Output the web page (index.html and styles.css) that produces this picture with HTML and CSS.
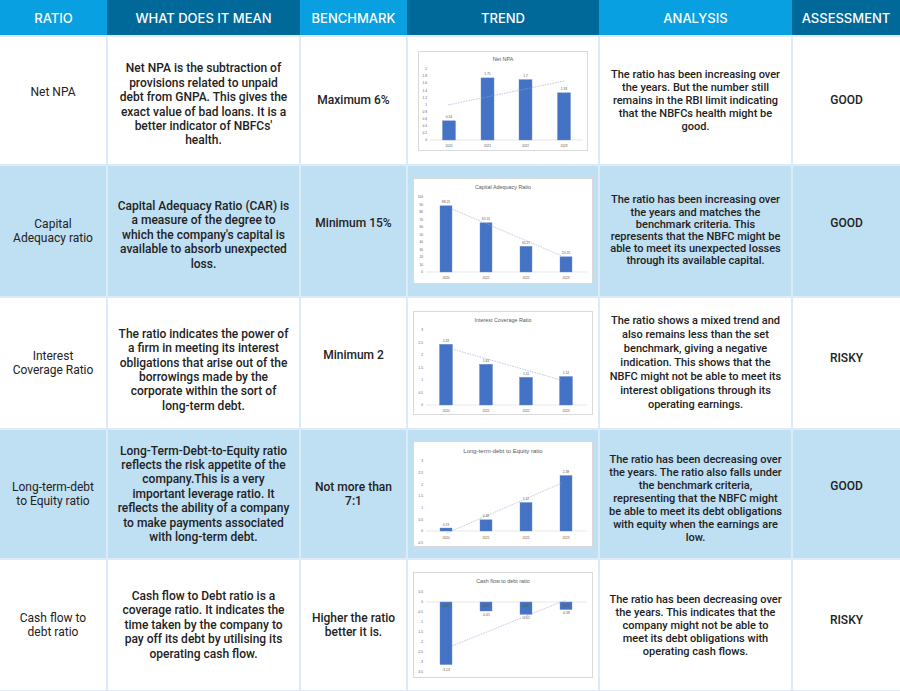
FILE: index.html
```html
<!DOCTYPE html>
<html lang="en">
<head>
<meta charset="utf-8">
<title>NBFC Ratio Analysis</title>
<link rel="stylesheet" href="styles.css">
</head>
<body>
<div class="sheet">
  <div class="head">
    <div class="h light">RATIO</div>
    <div class="h dark">WHAT DOES IT MEAN</div>
    <div class="h light">BENCHMARK</div>
    <div class="h dark">TREND</div>
    <div class="h light">ANALYSIS</div>
    <div class="h dark">ASSESSMENT</div>
  </div>
  <div class="grid">
    <!-- Row 1 -->
    <div class="row">
      <div class="cell ratio lift">Net NPA</div>
      <div class="cell drop-s">Net NPA is the subtraction of provisions related to unpaid debt from GNPA. This gives the exact value of bad loans. It is a better indicator of NBFCs' health.</div>
      <div class="cell">Maximum 6%</div>
      <div class="cell trend">
        <svg class="chart" width="170" height="100" viewBox="0 0 170 100">
          <rect class="frame" x="0.5" y="0.5" width="169" height="99"/>
          <text class="ct" x="85" y="10">Net NPA</text>
          <g class="ya">
            <text x="9" y="19.2">2</text><text x="9" y="26.3">1.8</text><text x="9" y="33.4">1.6</text>
            <text x="9" y="40.5">1.4</text><text x="9" y="47.6">1.2</text><text x="9" y="54.7">1</text>
            <text x="9" y="61.8">0.8</text><text x="9" y="68.9">0.6</text><text x="9" y="76">0.4</text>
            <text x="9" y="83.1">0.2</text><text x="9" y="90.2">0</text>
          </g>
          <line class="axis" x1="12" y1="89" x2="165" y2="89"/>
          <rect class="bar" x="24.5" y="69.8" width="13" height="19.2"/>
          <rect class="bar" x="63" y="26.9" width="13" height="62.1"/>
          <rect class="bar" x="101" y="28.6" width="13" height="60.4"/>
          <rect class="bar" x="139.5" y="41.8" width="13" height="47.2"/>
          <g class="dl">
            <text x="31" y="67.3">0.54</text><text x="69.5" y="24.4">1.75</text>
            <text x="107.5" y="26.1">1.7</text><text x="146" y="39.3">1.33</text>
          </g>
          <g class="xa">
            <text x="31" y="95.5">2020</text><text x="69.5" y="95.5">2021</text>
            <text x="107.5" y="95.5">2022</text><text x="146" y="95.5">2023</text>
          </g>
          <line class="tl" x1="30" y1="54" x2="146" y2="30"/>
        </svg>
      </div>
      <div class="cell an">The ratio has been increasing over the years. But the number still remains in the RBI limit indicating that the NBFCs health might be good.</div>
      <div class="cell">GOOD</div>
    </div>

    <!-- Row 2 -->
    <div class="row alt">
      <div class="cell ratio">Capital Adequacy ratio</div>
      <div class="cell drop-s">Capital Adequacy Ratio (CAR) is a measure of the degree to which the company's capital is available to absorb unexpected loss.</div>
      <div class="cell lift">Minimum 15%</div>
      <div class="cell trend">
        <svg class="chart" width="180" height="106" viewBox="0 0 180 106">
          <rect class="frame" x="0.5" y="0.5" width="179" height="105"/>
          <text class="ct" x="90" y="10.5">Capital Adequacy Ratio</text>
          <g class="ya">
            <text x="10" y="20.2">100</text><text x="10" y="27.7">90</text><text x="10" y="35.2">80</text>
            <text x="10" y="42.7">70</text><text x="10" y="50.2">60</text><text x="10" y="57.7">50</text>
            <text x="10" y="65.2">40</text><text x="10" y="72.7">30</text><text x="10" y="80.2">20</text>
            <text x="10" y="87.7">10</text><text x="10" y="95.2">0</text>
          </g>
          <line class="axis" x1="13" y1="94" x2="174" y2="94"/>
          <rect class="bar" x="27" y="27.8" width="12" height="66.2"/>
          <rect class="bar" x="67" y="44.8" width="12" height="49.2"/>
          <rect class="bar" x="107" y="68.3" width="12" height="25.7"/>
          <rect class="bar" x="147" y="78.8" width="12" height="15.2"/>
          <g class="dl">
            <text x="33" y="25">88.25</text><text x="73" y="42">65.55</text>
            <text x="113" y="65.5">34.27</text><text x="153" y="76">20.25</text>
          </g>
          <g class="xa">
            <text x="33" y="101">2020</text><text x="73" y="101">2021</text>
            <text x="113" y="101">2022</text><text x="153" y="101">2023</text>
          </g>
          <line class="tl" x1="39" y1="31" x2="149" y2="78"/>
        </svg>
      </div>
      <div class="cell an tight">The ratio has been increasing over the years and matches the benchmark criteria. This<br>represents that the NBFC might be able to meet its unexpected losses through its available capital.</div>
      <div class="cell lift">GOOD</div>
    </div>

    <!-- Row 3 -->
    <div class="row">
      <div class="cell ratio">Interest Coverage Ratio</div>
      <div class="cell drop">The ratio indicates the power of a firm in meeting its interest obligations that arise out of the borrowings made by the corporate within the sort of long-term debt.</div>
      <div class="cell lift">Minimum 2</div>
      <div class="cell trend">
        <svg class="chart" width="180" height="104" viewBox="0 0 180 104">
          <rect class="frame" x="0.5" y="0.5" width="179" height="103"/>
          <text class="ct" x="90" y="11">Interest Coverage Ratio</text>
          <g class="ya">
            <text x="10" y="20.2">3</text><text x="10" y="32.7">2.5</text><text x="10" y="45.2">2</text>
            <text x="10" y="57.7">1.5</text><text x="10" y="70.2">1</text><text x="10" y="82.7">0.5</text>
            <text x="10" y="95.2">0</text>
          </g>
          <line class="axis" x1="13" y1="94" x2="174" y2="94"/>
          <rect class="bar" x="26.5" y="33.25" width="13" height="60.75"/>
          <rect class="bar" x="66.5" y="53.25" width="13" height="40.75"/>
          <rect class="bar" x="106.5" y="66.25" width="13" height="27.75"/>
          <rect class="bar" x="146.5" y="65.5" width="13" height="28.5"/>
          <g class="dl">
            <text x="33" y="30.5">2.43</text><text x="73" y="50.5">1.63</text>
            <text x="113" y="63.5">1.11</text><text x="153" y="62.8">1.14</text>
          </g>
          <g class="xa">
            <text x="33" y="100.5">2020</text><text x="73" y="100.5">2021</text>
            <text x="113" y="100.5">2022</text><text x="153" y="100.5">2023</text>
          </g>
          <line class="tl" x1="39" y1="38" x2="148" y2="69"/>
        </svg>
      </div>
      <div class="cell an loose">The ratio shows a mixed trend and also remains less than the set benchmark, giving a negative indication. This shows that the NBFC might not be able to meet its interest obligations through its operating earnings.</div>
      <div class="cell lift-m">RISKY</div>
    </div>

    <!-- Row 4 -->
    <div class="row alt">
      <div class="cell ratio">Long-term-debt to Equity ratio</div>
      <div class="cell">Long-Term-Debt-to-Equity ratio reflects the risk appetite of the company.This is a very important leverage ratio. It reflects the ability of a company to make payments associated with long-term debt.</div>
      <div class="cell">Not more than 7:1</div>
      <div class="cell trend">
        <svg class="chart" width="180" height="106" viewBox="0 0 180 106">
          <rect class="frame" x="0.5" y="0.5" width="179" height="105"/>
          <text class="ct big" x="90" y="12">Long-term-debt to Equity ratio</text>
          <g class="ya">
            <text x="10" y="21.2">3</text><text x="10" y="32.9">2.5</text><text x="10" y="44.5">2</text>
            <text x="10" y="56.2">1.5</text><text x="10" y="67.9">1</text><text x="10" y="79.5">0.5</text>
            <text x="10" y="91.2">0</text><text x="10" y="102.9">-0.5</text>
          </g>
          <line class="axis" x1="13" y1="90" x2="174" y2="90"/>
          <rect class="bar" x="27" y="87" width="12" height="3"/>
          <rect class="bar" x="67" y="78.8" width="12" height="11.2"/>
          <rect class="bar" x="107" y="61.5" width="12" height="28.5"/>
          <rect class="bar" x="147" y="34.5" width="12" height="55.5"/>
          <g class="dl">
            <text x="33" y="84.5">0.13</text><text x="73" y="76.3">0.48</text>
            <text x="113" y="59">1.22</text><text x="153" y="32">2.38</text>
          </g>
          <g class="xa">
            <text x="33" y="97.5">2020</text><text x="73" y="97.5">2021</text>
            <text x="113" y="97.5">2022</text><text x="153" y="97.5">2023</text>
          </g>
          <line class="tl" x1="34" y1="92" x2="149" y2="42"/>
        </svg>
      </div>
      <div class="cell an drop-s">The ratio has been decreasing over the years. The ratio also falls under the benchmark criteria, representing that the NBFC might be able to meet its debt obligations with equity when the earnings are low.</div>
      <div class="cell lift">GOOD</div>
    </div>

    <!-- Row 5 -->
    <div class="row">
      <div class="cell ratio">Cash flow to debt ratio</div>
      <div class="cell">Cash flow to Debt ratio is a coverage ratio. It indicates the time taken by the company to pay off its debt by utilising its operating cash flow.</div>
      <div class="cell">Higher the ratio better it is.</div>
      <div class="cell trend">
        <svg class="chart" width="180" height="106" viewBox="0 0 180 106">
          <rect class="frame" x="0.5" y="0.5" width="179" height="105"/>
          <text class="ct" x="90" y="11">Cash flow to debt ratio</text>
          <g class="ya">
            <text x="10" y="21.2">0.5</text><text x="10" y="31.2">0</text><text x="10" y="41.2">-0.5</text>
            <text x="10" y="51.2">-1</text><text x="10" y="61.2">-1.5</text><text x="10" y="71.2">-2</text>
            <text x="10" y="81.2">-2.5</text><text x="10" y="91.2">-3</text><text x="10" y="101.2">-3.5</text>
          </g>
          <line class="axis" x1="13" y1="30" x2="174" y2="30"/>
          <rect class="bar" x="27" y="30" width="12" height="62.6"/>
          <rect class="bar" x="67" y="30" width="12" height="9"/>
          <rect class="bar" x="107" y="30" width="12" height="12.4"/>
          <rect class="bar" x="147" y="30" width="12" height="7.6"/>
          <g class="xa">
            <text x="33" y="35">2020</text><text x="73" y="35">2021</text>
            <text x="113" y="35">2022</text><text x="153" y="35">2023</text>
          </g>
          <g class="dl">
            <text x="33" y="98.5">-3.13</text><text x="73" y="43.5">-0.45</text>
            <text x="113" y="46.8">-0.62</text><text x="153" y="42">-0.38</text>
          </g>
          <line class="tl" x1="39" y1="74" x2="153" y2="28"/>
        </svg>
      </div>
      <div class="cell an">The ratio has been decreasing over the years. This indicates that the company might not be able to<br>meet its debt obligations with operating cash flows.</div>
      <div class="cell lift-m">RISKY</div>
    </div>
  </div>
</div>
</body>
</html>
```
FILE: styles.css
```css
html, body {
  margin: 0;
  padding: 0;
  background: #ffffff;
}

body {
  font-family: Roboto, "Liberation Sans", Arial, sans-serif;
  color: #222222;
}

.sheet {
  width: 900px;
  height: 691px;
  background: #dcebf7;
  display: flex;
  flex-direction: column;
  overflow: hidden;
}

.head {
  display: grid;
  grid-template-columns: 107px 193px 107px 192px 193px 108px;
  height: 35px;
  flex: none;
}

.h {
  display: flex;
  align-items: center;
  justify-content: center;
  padding-top: 1px;
  color: #ffffff;
  font-family: Inter, "Open Sans", sans-serif;
  font-weight: 500;
  font-size: 13px;
  letter-spacing: 0;
}

.h.light { background: #08a0e1; }
.h.dark { background: #00699a; }

.grid {
  display: grid;
  grid-template-columns: 106px 191px 105px 190px 191px 107px;
  grid-template-rows: 127px 130px 130px 128px 130px;
  gap: 2px;
  margin-top: 2px;
}

.row { display: contents; }

.cell {
  background: #ffffff;
  display: flex;
  align-items: center;
  justify-content: center;
  text-align: center;
  box-sizing: border-box;
  padding: 0 8px;
  font-size: 12px;
  line-height: 14.4px;
  font-weight: 500;
}

.row.alt > .cell { background: #bfdff3; }

.cell.ratio { font-weight: 400; }
.cell.trend { padding: 0; }

.cell.an {
  font-size: 11px;
  line-height: 13px;
}
.cell.an.tight { line-height: 12.2px; }
.cell.an.loose { line-height: 14px; }

.cell.lift { padding-bottom: 16px; }
.cell.lift-m { padding-bottom: 9px; }
.cell.drop { padding-top: 14px; }
.cell.drop-s { padding-top: 8px; }

/* charts */
.chart { display: block; }
.chart .frame { fill: #ffffff; stroke: #d9d9d9; stroke-width: 1; }
.chart text { font-family: "Liberation Sans", Arial, sans-serif; fill: #595959; }
.chart .ct { font-size: 5.4px; text-anchor: middle; }
.chart .ct.big { font-size: 6px; }
.chart .ya text { font-size: 3.2px; text-anchor: end; }
.chart .xa text { font-size: 3.2px; text-anchor: middle; }
.chart .dl text { font-size: 3.3px; text-anchor: middle; }
.chart .axis { stroke: #d9d9d9; stroke-width: 0.6; }
.chart .bar { fill: #4472c4; stroke: #6b8fd0; stroke-width: 0.4; }
.chart .tl { stroke: #8eaadb; stroke-width: 0.6; stroke-dasharray: 1.6 1; }
```
